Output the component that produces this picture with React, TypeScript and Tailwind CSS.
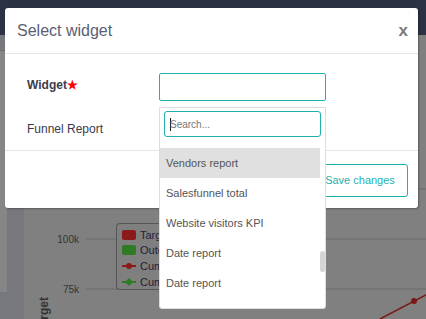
import React from "react";

const F = { fontFamily: '"Liberation Sans", Arial, sans-serif' };

export default function App() {
  const items = ["Vendors report", "Salesfunnel total", "Website visitors KPI", "Date report", "Date report"];
  return (
    <div className="relative w-[426px] h-[319px] overflow-hidden bg-[#808080]" style={F}>
      {/* background page (dimmed) */}
      <div className="h-[35px] bg-[#2b3244]" />
      <div className="flex h-[284px]">
        <div className="w-[24px] flex flex-col bg-[#77787d]">
          <div className="h-[242px] w-[7px] bg-[#868686] border-t border-[#6e6e6e] mt-[15px]" />
        </div>
        <div className="relative flex-1">
          <svg className="absolute left-0 top-0" width="402" height="284">
            <line x1="62" y1="154" x2="402" y2="154" stroke="#6b6b6b" strokeWidth="1" />
            <line x1="62" y1="204" x2="402" y2="204" stroke="#6b6b6b" strokeWidth="1" />
            <line x1="62" y1="254" x2="402" y2="254" stroke="#6b6b6b" strokeWidth="1" />
            <line x1="356" y1="284" x2="402" y2="260" stroke="#7a1818" strokeWidth="1.5" />
            <circle cx="390" cy="266" r="3" fill="#7a1818" />
          </svg>
          <div className="absolute left-[30px] top-[197px] w-[25px] text-right text-[10px] text-[#333]">100k</div>
          <div className="absolute left-[30px] top-[247px] w-[25px] text-right text-[10px] text-[#333]">75k</div>
          <div className="absolute left-[92px] top-[188px] w-[44px] h-[67px] overflow-hidden rounded-l-[4px] border border-r-0 border-[#555] bg-[#7f7f7f] flex flex-col pl-[5px] pt-[4px] gap-[1px] text-[11px] text-[#1e2238] whitespace-nowrap">
            <div className="flex items-center gap-[4px] h-[14px]"><span className="w-[14px] h-[10px] shrink-0 rounded-[2px] bg-[#8b1a1a]" />Targ</div>
            <div className="flex items-center gap-[4px] h-[14px]"><span className="w-[14px] h-[10px] shrink-0 rounded-[2px] bg-[#2f7a24]" />Outc</div>
            <div className="flex items-center gap-[4px] h-[16px]">
              <svg width="14" height="8" className="shrink-0"><line x1="0" y1="4" x2="14" y2="4" stroke="#8b1a1a" strokeWidth="2" /><circle cx="7" cy="4" r="3" fill="#8b1a1a" /></svg>Cum
            </div>
            <div className="flex items-center gap-[4px] h-[14px]">
              <svg width="14" height="8" className="shrink-0"><line x1="0" y1="4" x2="14" y2="4" stroke="#2f7a24" strokeWidth="2" /><polygon points="7,0 11,4 7,8 3,4" fill="#2f7a24" /></svg>Cum
            </div>
          </div>
          <div className="absolute left-[13px] top-[262px] text-[12px] leading-[14px] font-bold text-[#333] whitespace-nowrap [writing-mode:vertical-rl] rotate-180">Target</div>
        </div>
      </div>

      {/* modal */}
      <div className="absolute left-[5px] top-[8px] w-[413px] h-[200px] bg-white rounded-[3px] shadow-[1px_1px_2px_rgba(0,0,0,0.3)] flex flex-col">
        <div className="h-[46px] border-b border-[#e6e6e6] flex items-center justify-between pl-[12px] pr-[10px]">
          <span className="text-[16px] text-[#5a6074]">Select widget</span>
          <span className="text-[17px] font-bold text-[#7a7a7a] leading-none mb-[1px]">x</span>
        </div>
        <div className="h-[97px] border-b border-[#e6e6e6] flex flex-col pl-[22px]">
          <div className="flex items-center mt-[19px] h-[28px]">
            <span className="w-[132px] text-[12px] font-bold text-[#3d3d4d] -mt-[5px]">Widget<span className="text-[#ff0000] text-[12px] align-top">★</span></span>
            <div className="w-[167px] h-[28px] border border-[#1fb0ad] rounded-[2px]" />
          </div>
          <div className="mt-[19px] text-[12px] text-[#3a3a4a]">Funnel Report</div>
        </div>
        <div className="flex-1 flex items-center justify-end pr-[10px]">
          <button className="h-[33px] w-[96px] border border-[#1fb0ad] rounded-[3px] text-[11px] text-[#1fb0ad] mt-[1px]" style={F}>Save changes</button>
        </div>
      </div>

      {/* dropdown */}
      <div className="absolute left-[159px] top-[107px] w-[167px] h-[202px] bg-white border border-[#dcdce4] rounded-b-[3px] flex flex-col">
        <div className="px-[4px] pt-[3px]">
          <div className="h-[26px] border border-[#1fb0ad] rounded-[3px] flex items-center pl-[5px]">
            <span className="w-px h-[13px] bg-[#222]" />
            <span className="text-[10px] text-[#777] -ml-[1px]">Search...</span>
          </div>
        </div>
        <div className="relative flex-1 mt-[11px]">
          <div className="flex flex-col w-[160px]">
            {items.map((t, i) => (
              <div key={i} className={"h-[30px] flex items-center pl-[6px] text-[11px] text-[#555] " + (i === 0 ? "bg-[#e0e0e0]" : "")}>{t}</div>
            ))}
          </div>
          <div className="absolute left-[160px] top-[103px] w-[5px] h-[21px] rounded-[3px] bg-[#d4d4d4]" />
        </div>
      </div>
    </div>
  );
}
